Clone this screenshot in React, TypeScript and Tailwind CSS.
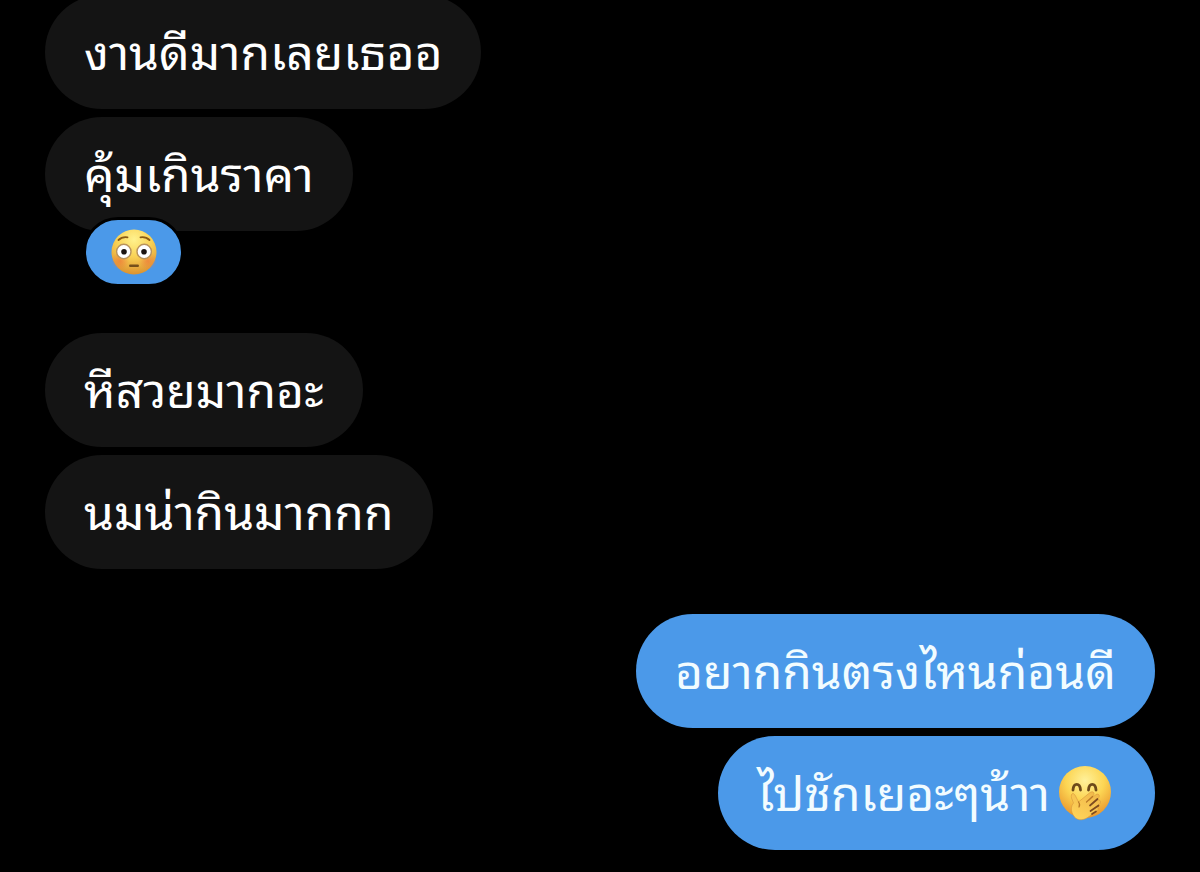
import type { ReactNode } from 'react';
import clsx from 'clsx';

type Message = {
  id: number;
  text: string;
  emoji?: ReactNode;
  reaction?: ReactNode;
};

type Group = {
  id: number;
  mine: boolean;
  messages: Message[];
};

const FlushedFace = ({ className }: { className?: string }) => (
  <svg viewBox="0 0 46 46" className={className} role="img" aria-label="Flushed face">
    <defs>
      <radialGradient id="flushed-skin" cx="50%" cy="22%" r="78%">
        <stop offset="0" stopColor="#fff28e" />
        <stop offset="0.5" stopColor="#f9d154" />
        <stop offset="1" stopColor="#dc9230" />
      </radialGradient>
      <radialGradient id="flushed-cheek">
        <stop offset="0" stopColor="#f0793a" stopOpacity="0.7" />
        <stop offset="1" stopColor="#f0793a" stopOpacity="0" />
      </radialGradient>
    </defs>
    <circle cx="23" cy="23" r="22.5" fill="url(#flushed-skin)" />
    <circle cx="9" cy="32" r="9" fill="url(#flushed-cheek)" />
    <circle cx="37" cy="32" r="9" fill="url(#flushed-cheek)" />
    <g fill="none" stroke="#8a5a14" strokeWidth="1.8" strokeLinecap="round">
      <path d="M7.5 11 Q11 7.5 16.5 8.3" />
      <path d="M38.5 11 Q35 7.5 29.5 8.3" />
    </g>
    <g fill="#fff" stroke="#b9935c" strokeWidth="1.4">
      <circle cx="12.8" cy="22.5" r="7.2" />
      <circle cx="33.2" cy="22.5" r="7.2" />
    </g>
    <circle cx="13" cy="22.8" r="2.8" fill="#1c1411" />
    <circle cx="33" cy="22.8" r="2.8" fill="#1c1411" />
    <rect x="18" y="35.5" width="10" height="2.4" rx="1.2" fill="#76501b" />
  </svg>
);

const GigglingFace = ({ className }: { className?: string }) => (
  <svg viewBox="0 0 54 56" className={className} role="img" aria-label="Face with hand over mouth">
    <defs>
      <radialGradient id="giggle-skin" cx="50%" cy="28%" r="74%">
        <stop offset="0" stopColor="#fff19a" />
        <stop offset="0.5" stopColor="#fcd553" />
        <stop offset="1" stopColor="#e8922b" />
      </radialGradient>
      <linearGradient id="giggle-hand" x1="0.8" y1="0" x2="0.2" y2="1">
        <stop offset="0" stopColor="#f0b84a" />
        <stop offset="1" stopColor="#ffd45a" />
      </linearGradient>
    </defs>
    <circle cx="27" cy="27" r="26" fill="url(#giggle-skin)" />
    <g fill="none" stroke="#6d4a1a" strokeWidth="2.8" strokeLinecap="round">
      <path d="M15 25 C15.5 17.5 22 17.5 22.5 25" />
      <path d="M30.5 25 C31 17.5 37.5 17.5 38 25" />
    </g>
    <path
      d="M13.5 33 C12.5 28 15.5 27 17.5 31 L20.5 37 L32 27.5 C35 25.5 37.5 28 35 31 L31 35.5 L38 29.5 C41 28 42.5 31 40 33.5 L34 39 L39.5 35 C42.5 34 43.5 37.5 41 39.5 L34.5 44.5 L38 42.5 C40.5 42 41 44.5 39 46 L31 51.5 C26 55.5 20 56 16.5 52 C12 46 13 41 15.5 38 Z"
      fill="url(#giggle-hand)"
      stroke="#d6953a"
      strokeWidth="0.6"
      strokeLinejoin="round"
    />
    <g fill="none" stroke="#7d4a20" strokeWidth="1.7" strokeLinecap="round">
      <path d="M39.5 34 L32 40.5" />
      <path d="M40.5 40.5 L32.5 46" />
      <path d="M38 46.5 L34 49" />
    </g>
    <g fill="none" stroke="#b87828" strokeWidth="1.2" strokeLinecap="round">
      <path d="M34.5 31.5 L28.5 37" />
      <path d="M20.5 37 Q22.5 39.5 21 42" />
    </g>
  </svg>
);

const groups: Group[] = [
  {
    id: 1,
    mine: false,
    messages: [
      { id: 1, text: 'งานดีมากเลยเธออ' },
      { id: 2, text: 'คุ้มเกินราคา', reaction: <FlushedFace className="size-[46px]" /> },
    ],
  },
  {
    id: 2,
    mine: false,
    messages: [
      { id: 3, text: 'หีสวยมากอะ' },
      { id: 4, text: 'นมน่ากินมากกก' },
    ],
  },
  {
    id: 3,
    mine: true,
    messages: [
      { id: 5, text: 'อยากกินตรงไหนก่อนดี' },
      { id: 6, text: 'ไปชักเยอะๆน้าา', emoji: <GigglingFace className="mr-1 ml-2 h-14 w-[54px]" /> },
    ],
  },
];

const Bubble = ({ message, mine }: { message: Message; mine: boolean }) => (
  <li className={clsx('relative', message.reaction && 'mb-[57px]')}>
    <div
      className={clsx(
        'flex h-[114px] items-center rounded-full px-[39px] text-5xl',
        mine ? 'bg-[#4b99e9] text-[#f2fcff]' : 'bg-[#141414] text-white',
      )}
    >
      <span className="pb-1.5 whitespace-nowrap">{message.text}</span>
      {message.emoji}
    </div>
    {message.reaction && (
      <button
        type="button"
        aria-label="Reaction"
        className="absolute top-[100px] left-[38px] flex h-[70px] w-[101px] items-center justify-center rounded-full border-3 border-black bg-[#4b99e9]"
      >
        {message.reaction}
      </button>
    )}
  </li>
);

export default function App() {
  return (
    <main className="min-h-screen overflow-hidden bg-black px-[45px] pb-5 font-['Noto_Sans_Thai_Looped','Loma','Garuda','Waree','Noto_Sans_Thai','Liberation_Sans',sans-serif]">
      <div className="-mt-[5px] flex flex-col gap-[45px]">
        {groups.map((group) => (
          <ul
            key={group.id}
            className={clsx('flex flex-col gap-2', group.mine ? 'items-end' : 'items-start')}
          >
            {group.messages.map((message) => (
              <Bubble key={message.id} message={message} mine={group.mine} />
            ))}
          </ul>
        ))}
      </div>
    </main>
  );
}
